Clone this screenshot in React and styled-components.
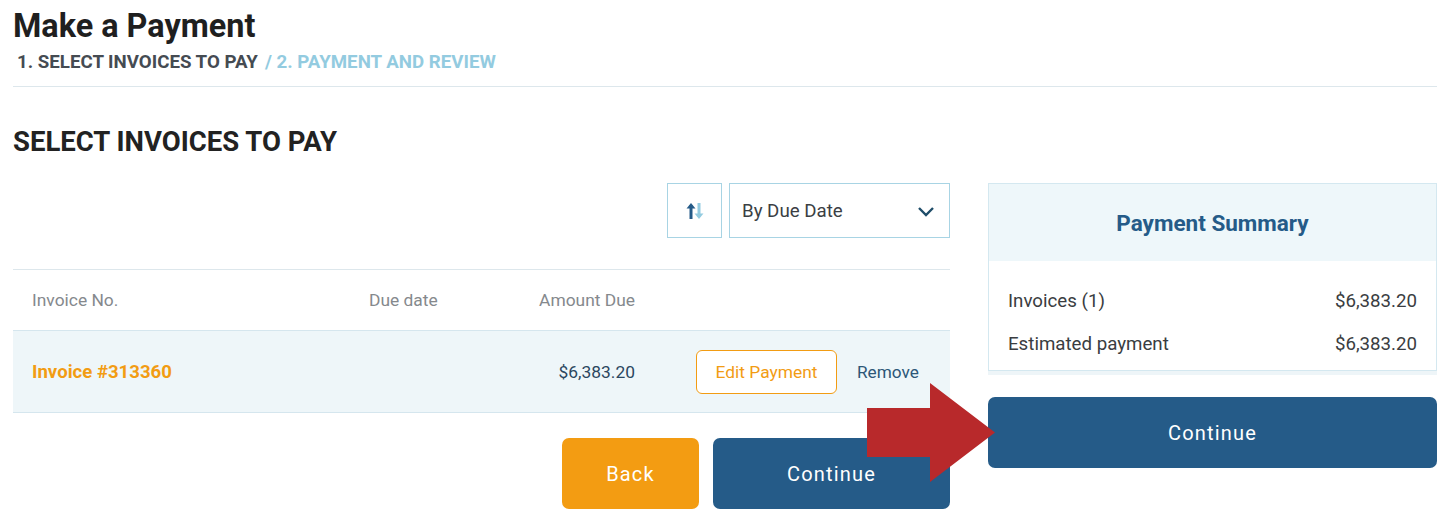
import React from 'react'
import styled, { createGlobalStyle } from 'styled-components'

const Global = createGlobalStyle`
  html, body { margin: 0; padding: 0; background: #fff; }
  body { font-family: Roboto, "Liberation Sans", sans-serif; color: #222; }
  * { box-sizing: border-box; }
`

const Page = styled.div`
  position: relative;
  width: 1448px;
  height: 521px;
  padding: 6px 11px 0 13px;
  overflow: hidden;
`

const Title = styled.h1`
  margin: 0;
  font-size: 32.4px;
  line-height: 40px;
  font-weight: 700;
  color: #1f1f1f;
`

const Steps = styled.div`
  margin: 4px 0 0 4px;
  font-size: 18.7px;
  line-height: 24px;
  font-weight: 700;
  text-transform: uppercase;
  display: flex;
  gap: 7px;
`

const Step = styled.span`
  color: ${({ $active }) => ($active ? '#454b52' : '#93cbe0')};
`

const Rule = styled.hr`
  margin: 12px 0 0;
  border: 0;
  border-top: 1px solid #dde7ec;
`

const SectionTitle = styled.h2`
  margin: 39px 0 0;
  font-size: 27.5px;
  line-height: 32px;
  font-weight: 700;
  color: #222;
`

const Main = styled.div`
  margin-top: 25px;
  display: grid;
  grid-template-columns: 937px 449px;
  gap: 38px;
  align-items: start;
`

const Toolbar = styled.div`
  display: flex;
  justify-content: flex-end;
  gap: 7px;
`

const SortButton = styled.button`
  width: 55px;
  height: 55px;
  border: 1px solid #a8d4e4;
  background: #fff;
  display: flex;
  align-items: center;
  justify-content: center;
  padding: 0;
`

const Select = styled.div`
  width: 221px;
  height: 55px;
  border: 1px solid #a8d4e4;
  display: flex;
  align-items: center;
  justify-content: space-between;
  padding: 0 14px 0 12px;
  font-size: 18.7px;
  color: #3b3f44;
`

const Table = styled.div`
  margin-top: 31px;
  border-top: 1px solid #dde7ec;
`

const Row = styled.div`
  display: grid;
  grid-template-columns: 337px 130px 136px 1fr;
  align-items: center;
  padding-left: 19px;
  height: ${({ $head }) => ($head ? '60px' : '83px')};
  background: ${({ $head }) => ($head ? '#fff' : '#eef6f9')};
  border-top: ${({ $head }) => ($head ? '0' : '1px solid #d5e6ee')};
  border-bottom: ${({ $head }) => ($head ? '0' : '1px solid #d5e6ee')};
`

const HeadCell = styled.div`
  font-size: 17.4px;
  color: #85898d;
  text-align: ${({ $right }) => ($right ? 'right' : 'left')};
`

const InvoiceLink = styled.div`
  font-size: 18.6px;
  font-weight: 700;
  color: #f29c13;
`

const Amount = styled.div`
  font-size: 17.4px;
  color: #2b4760;
  text-align: right;
`

const Actions = styled.div`
  display: flex;
  align-items: center;
  padding-left: 61px;
  gap: 20px;
`

const EditButton = styled.button`
  height: 44px;
  width: 141px;
  border: 1px solid #f29c13;
  border-radius: 6px;
  background: #fff;
  color: #f29c13;
  font-family: inherit;
  font-size: 17.4px;
`

const LinkButton = styled.span`
  font-size: 17.2px;
  color: #2d5778;
`

const ButtonRow = styled.div`
  margin-top: 25px;
  display: flex;
  justify-content: flex-end;
  gap: 14px;
`

const Button = styled.button`
  height: 71px;
  width: ${({ $w }) => $w || '100%'};
  border: 0;
  border-radius: 7px;
  background: ${({ $variant }) => ($variant === 'back' ? '#f39c12' : '#255b88')};
  color: #fff;
  font-family: inherit;
  font-size: 20px;
  font-weight: 400;
  letter-spacing: 1.2px;
`

const Card = styled.div`
  border: 1px solid #d4e8f0;
  box-shadow: 0 4px 0 #eef5f8;
  margin-bottom: 26px;
`

const CardHead = styled.div`
  height: 77px;
  background: #eef7fa;
  display: flex;
  align-items: center;
  justify-content: center;
  font-size: 22.5px;
  font-weight: 700;
  color: #255b88;
`

const CardBody = styled.div`
  padding: 19px 19px 4px;
`

const SumRow = styled.div`
  display: flex;
  justify-content: space-between;
  font-size: 18.7px;
  line-height: 43px;
  color: #3a3d41;
`

const Arrow = styled.svg`
  position: absolute;
  left: 867px;
  top: 383px;
`

export default function App() {
  return (
    <Page>
      <Global />
      <Title>Make a Payment</Title>
      <Steps>
        <Step $active>1. Select invoices to pay</Step>
        <Step>/ 2. Payment and review</Step>
      </Steps>
      <Rule />
      <SectionTitle>SELECT INVOICES TO PAY</SectionTitle>
      <Main>
        <div>
          <Toolbar>
            <SortButton aria-label="Sort">
              <svg width="22" height="22" viewBox="0 0 22 22">
                <path d="M7 19V5" stroke="#255b88" strokeWidth="3" />
                <path d="M2.5 8.5L7 3l4.5 5.5z" fill="#255b88" />
                <path d="M15 3v14" stroke="#93cbe0" strokeWidth="3" />
                <path d="M10.5 13.5L15 19l4.5-5.5z" fill="#93cbe0" />
              </svg>
            </SortButton>
            <Select>
              By Due Date
              <svg width="18" height="12" viewBox="0 0 18 12">
                <path d="M2 3l7 7 7-7" stroke="#1f4d69" strokeWidth="2.4" fill="none" />
              </svg>
            </Select>
          </Toolbar>
          <Table>
            <Row $head>
              <HeadCell>Invoice No.</HeadCell>
              <HeadCell>Due date</HeadCell>
              <HeadCell $right>Amount Due</HeadCell>
              <div />
            </Row>
            <Row>
              <InvoiceLink>Invoice #313360</InvoiceLink>
              <div />
              <Amount>$6,383.20</Amount>
              <Actions>
                <EditButton>Edit Payment</EditButton>
                <LinkButton>Remove</LinkButton>
              </Actions>
            </Row>
          </Table>
          <ButtonRow>
            <Button $variant="back" $w="137px">Back</Button>
            <Button $w="237px">Continue</Button>
          </ButtonRow>
        </div>
        <div>
          <Card>
            <CardHead>Payment Summary</CardHead>
            <CardBody>
              <SumRow>
                <span>Invoices (1)</span>
                <span>$6,383.20</span>
              </SumRow>
              <SumRow>
                <span>Estimated payment</span>
                <span>$6,383.20</span>
              </SumRow>
            </CardBody>
          </Card>
          <Button>Continue</Button>
        </div>
      </Main>
      <Arrow width="129" height="100" viewBox="0 0 129 100">
        <path d="M0 25H63V0L128 49.5L63 99V74H0Z" fill="#b8292b" />
      </Arrow>
    </Page>
  )
}
